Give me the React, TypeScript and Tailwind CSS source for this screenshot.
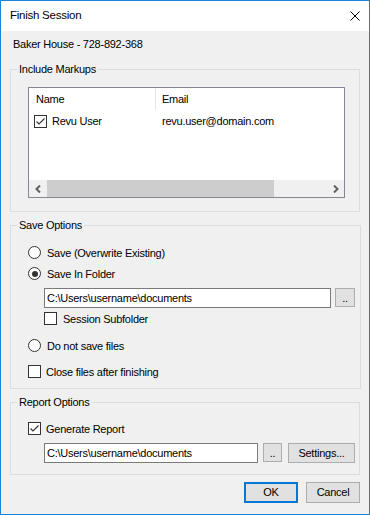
import type { ReactNode } from "react";

const font = "font-['Liberation_Sans',Arial,sans-serif]";

function CheckBox({ checked }: { checked?: boolean }) {
  return (
    <span className="w-[13px] h-[13px] shrink-0 border border-[#333333] bg-white flex items-center justify-center">
      {checked && (
        <svg width="11" height="11" viewBox="0 0 11 11">
          <polyline points="1.5,5.5 4,8 9.5,2.5" fill="none" stroke="#333333" strokeWidth="1.1" />
        </svg>
      )}
    </span>
  );
}

function Radio({ checked }: { checked?: boolean }) {
  return (
    <span className="w-[13px] h-[13px] shrink-0 rounded-full border border-[#333333] bg-white flex items-center justify-center">
      {checked && <span className="w-[6px] h-[6px] rounded-full bg-[#333333]" />}
    </span>
  );
}

function Group({ title, children }: { title: string; children: ReactNode }) {
  return (
    <fieldset className="border border-[#dcdcdc]">
      <legend className="ml-[6px] px-[2px] leading-[14px]">{title}</legend>
      {children}
    </fieldset>
  );
}

function PathBox({ width }: { width: string }) {
  return (
    <div className={`${width} h-[20px] shrink-0 border border-[#7a7a7a] bg-white flex items-center pl-[2px] leading-[14px]`}>
      C:\Users\username\documents
    </div>
  );
}

function Arrow({ dir }: { dir: "left" | "right" }) {
  return (
    <svg width="6" height="8" viewBox="0 0 6 8">
      <polyline
        points={dir === "left" ? "5,0.5 1.5,4 5,7.5" : "1,0.5 4.5,4 1,7.5"}
        fill="none"
        stroke="#606060"
        strokeWidth="2"
      />
    </svg>
  );
}

export default function App() {
  return (
    <div className={`w-[370px] h-[515px] border border-[#1883d7] bg-[#f0f0f0] flex flex-col text-[11px] tracking-[-0.25px] text-black ${font}`}>
      {/* title bar */}
      <div className="h-[30px] shrink-0 bg-white flex items-center justify-between pl-[9px] pr-[9px]">
        <span className="text-[11.5px]">Finish Session</span>
        <svg width="10" height="10" viewBox="0 0 10 10">
          <path d="M0.5 0.5 L9.5 9.5 M9.5 0.5 L0.5 9.5" stroke="#000" strokeWidth="1" />
        </svg>
      </div>

      <div className="flex-1 px-[9px] flex flex-col">
        <div className="mt-[6px] pl-[3px] leading-[14px]">Baker House - 728-892-368</div>

        <div className="mt-[11px]">
          <Group title="Include Markups">
            <div className="pl-[17px] pr-[14px] pt-[11px] pb-[13px]">
              <div className="h-[111px] border border-[#828790] bg-white flex flex-col">
                <div className="h-[22px] flex">
                  <div className="w-[126px] pl-[7px] flex items-center">Name</div>
                  <div className="w-px bg-[#e5e5e5]" />
                  <div className="pl-[6px] flex items-center">Email</div>
                </div>
                <div className="h-[22px] flex items-center">
                  <div className="w-[127px] pl-[5px] flex items-center gap-[5px]">
                    <CheckBox checked />
                    <span>Revu User</span>
                  </div>
                  <div className="pl-[6px]">revu.user@domain.com</div>
                </div>
                <div className="flex-1" />
                <div className="h-[17px] bg-[#f0f0f0] flex">
                  <div className="w-[18px] flex items-center justify-center">
                    <Arrow dir="left" />
                  </div>
                  <div className="w-[227px] bg-[#cdcdcd]" />
                  <div className="flex-1" />
                  <div className="w-[17px] flex items-center justify-center">
                    <Arrow dir="right" />
                  </div>
                </div>
              </div>
            </div>
          </Group>
        </div>

        <div className="mt-[6px]">
          <Group title="Save Options">
            <div className="pl-[17px] pr-[5px] pt-[14px] pb-[10px] flex flex-col leading-[14px]">
              <label className="h-[13px] flex items-center gap-[6px]">
                <Radio />
                <span>Save (Overwrite Existing)</span>
              </label>
              <label className="mt-[8px] h-[13px] flex items-center gap-[6px]">
                <Radio checked />
                <span>Save In Folder</span>
              </label>
              <div className="mt-[8px] ml-[16px] flex items-start">
                <PathBox width="w-[287px]" />
                <button className="ml-[4px] w-[20px] h-[19px] border border-[#adadad] bg-[#e1e1e1] flex items-center justify-center leading-[12px]">
                  ..
                </button>
              </div>
              <label className="mt-[4px] ml-[16px] h-[13px] flex items-center gap-[6px]">
                <CheckBox />
                <span>Session Subfolder</span>
              </label>
              <label className="mt-[14px] h-[13px] flex items-center gap-[6px]">
                <Radio />
                <span>Do not save files</span>
              </label>
              <label className="mt-[13px] h-[13px] flex items-center gap-[5px]">
                <CheckBox />
                <span>Close files after finishing</span>
              </label>
            </div>
          </Group>
        </div>

        <div className="mt-[6px]">
          <Group title="Report Options">
            <div className="pl-[17px] pr-[4px] pt-[13px] pb-[11px] flex flex-col leading-[14px]">
              <label className="h-[13px] flex items-center gap-[5px]">
                <CheckBox checked />
                <span>Generate Report</span>
              </label>
              <div className="mt-[8px] ml-[16px] flex items-start">
                <PathBox width="w-[214px]" />
                <button className="ml-[5px] w-[19px] h-[19px] border border-[#adadad] bg-[#e1e1e1] flex items-center justify-center leading-[12px]">
                  ..
                </button>
                <button className="ml-[6px] w-[67px] h-[20px] border border-[#adadad] bg-[#e1e1e1] flex items-center justify-center">
                  Settings...
                </button>
              </div>
            </div>
          </Group>
        </div>

        <div className="mt-[7px] flex justify-end gap-[8px]">
          <button className="w-[54px] h-[21px] border-2 border-[#0078d7] bg-[#e1e1e1] flex items-center justify-center">
            OK
          </button>
          <button className="w-[54px] h-[21px] border border-[#adadad] bg-[#e1e1e1] flex items-center justify-center">
            Cancel
          </button>
        </div>
      </div>
    </div>
  );
}
